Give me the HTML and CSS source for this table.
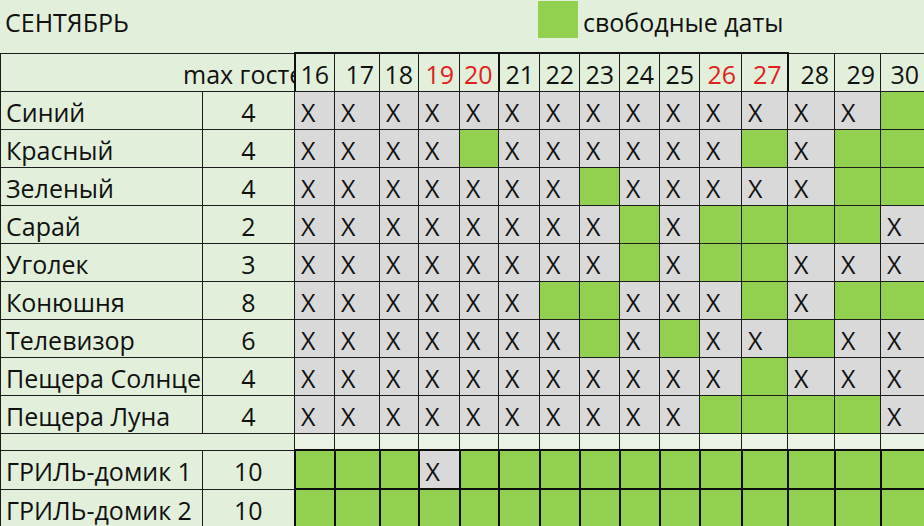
FILE: index.html
```html
<!DOCTYPE html>
<html lang="ru">
<head>
<meta charset="utf-8">
<title>Сентябрь</title>
<link rel="stylesheet" href="styles.css">
</head>
<body>
<div class="top">
  <div class="title">СЕНТЯБРЬ</div>
  <div class="legend"><span class="swatch"></span><span class="legend-text">свободные даты</span></div>
</div>
<table class="sheet">
  <colgroup>
    <col class="c-name"><col class="c-max">
    <col style="width:40px"><col style="width:45px"><col style="width:39px"><col style="width:41px"><col style="width:39px">
    <col style="width:41px"><col style="width:40px"><col style="width:40px"><col style="width:40px"><col style="width:40px">
    <col style="width:42px"><col style="width:46px"><col style="width:47px"><col style="width:46px"><col style="width:44px">
  </colgroup>
  <tr class="hdr">
    <td colspan="2" class="maxlabel">max гостей</td>
    <td class="d wk wk-l">16</td><td class="d wk">17</td><td class="d wk">18</td><td class="d wk red">19</td><td class="d wk wk-r red">20</td>
    <td class="d wk">21</td><td class="d wk">22</td><td class="d wk">23</td><td class="d wk">24</td><td class="d wk">25</td><td class="d wk red">26</td><td class="d wk wk-r red">27</td>
    <td class="d">28</td><td class="d">29</td><td class="d">30</td>
  </tr>
  <tr>
    <td class="name">Синий</td><td class="max">4</td>
    <td class="x">X</td><td class="x">X</td><td class="x">X</td><td class="x">X</td><td class="x">X</td><td class="x">X</td><td class="x">X</td><td class="x">X</td><td class="x">X</td><td class="x">X</td><td class="x">X</td><td class="x">X</td><td class="x">X</td><td class="x">X</td><td class="g"></td>
  </tr>
  <tr>
    <td class="name">Красный</td><td class="max">4</td>
    <td class="x">X</td><td class="x">X</td><td class="x">X</td><td class="x">X</td><td class="g"></td><td class="x">X</td><td class="x">X</td><td class="x">X</td><td class="x">X</td><td class="x">X</td><td class="x">X</td><td class="g"></td><td class="x">X</td><td class="g"></td><td class="g"></td>
  </tr>
  <tr>
    <td class="name">Зеленый</td><td class="max">4</td>
    <td class="x">X</td><td class="x">X</td><td class="x">X</td><td class="x">X</td><td class="x">X</td><td class="x">X</td><td class="x">X</td><td class="g"></td><td class="x">X</td><td class="x">X</td><td class="x">X</td><td class="x">X</td><td class="x">X</td><td class="g"></td><td class="g"></td>
  </tr>
  <tr>
    <td class="name">Сарай</td><td class="max">2</td>
    <td class="x">X</td><td class="x">X</td><td class="x">X</td><td class="x">X</td><td class="x">X</td><td class="x">X</td><td class="x">X</td><td class="x">X</td><td class="g"></td><td class="x">X</td><td class="g"></td><td class="g"></td><td class="g"></td><td class="g"></td><td class="x">X</td>
  </tr>
  <tr>
    <td class="name">Уголек</td><td class="max">3</td>
    <td class="x">X</td><td class="x">X</td><td class="x">X</td><td class="x">X</td><td class="x">X</td><td class="x">X</td><td class="x">X</td><td class="x">X</td><td class="g"></td><td class="x">X</td><td class="g"></td><td class="g"></td><td class="x">X</td><td class="x">X</td><td class="x">X</td>
  </tr>
  <tr>
    <td class="name">Конюшня</td><td class="max">8</td>
    <td class="x">X</td><td class="x">X</td><td class="x">X</td><td class="x">X</td><td class="x">X</td><td class="x">X</td><td class="g"></td><td class="g"></td><td class="x">X</td><td class="x">X</td><td class="x">X</td><td class="g"></td><td class="x">X</td><td class="g"></td><td class="g"></td>
  </tr>
  <tr>
    <td class="name">Телевизор</td><td class="max">6</td>
    <td class="x">X</td><td class="x">X</td><td class="x">X</td><td class="x">X</td><td class="x">X</td><td class="x">X</td><td class="x">X</td><td class="g"></td><td class="x">X</td><td class="g"></td><td class="x">X</td><td class="x">X</td><td class="g"></td><td class="x">X</td><td class="x">X</td>
  </tr>
  <tr>
    <td class="name">Пещера Солнце</td><td class="max">4</td>
    <td class="x">X</td><td class="x">X</td><td class="x">X</td><td class="x">X</td><td class="x">X</td><td class="x">X</td><td class="x">X</td><td class="x">X</td><td class="x">X</td><td class="x">X</td><td class="x">X</td><td class="g"></td><td class="x">X</td><td class="x">X</td><td class="x">X</td>
  </tr>
  <tr>
    <td class="name">Пещера Луна</td><td class="max">4</td>
    <td class="x">X</td><td class="x">X</td><td class="x">X</td><td class="x">X</td><td class="x">X</td><td class="x">X</td><td class="x">X</td><td class="x">X</td><td class="x">X</td><td class="x">X</td><td class="g"></td><td class="g"></td><td class="g"></td><td class="g"></td><td class="x">X</td>
  </tr>
  <tr class="spacer">
    <td colspan="2" class="sp-name"></td>
    <td class="sp"></td><td class="sp"></td><td class="sp"></td><td class="sp"></td><td class="sp"></td><td class="sp"></td><td class="sp"></td><td class="sp"></td><td class="sp"></td><td class="sp"></td><td class="sp"></td><td class="sp"></td><td class="sp"></td><td class="sp"></td><td class="sp"></td>
  </tr>
  <tr class="grill">
    <td class="name">ГРИЛЬ-домик 1</td><td class="max">10</td>
    <td class="g b">&nbsp;</td><td class="g b"></td><td class="g b"></td><td class="x b">X</td><td class="g b"></td><td class="g b"></td><td class="g b"></td><td class="g b"></td><td class="g b"></td><td class="g b"></td><td class="g b"></td><td class="g b"></td><td class="g b"></td><td class="g b"></td><td class="g b"></td>
  </tr>
  <tr class="grill">
    <td class="name">ГРИЛЬ-домик 2</td><td class="max">10</td>
    <td class="g b">&nbsp;</td><td class="g b"></td><td class="g b"></td><td class="g b"></td><td class="g b"></td><td class="g b"></td><td class="g b"></td><td class="g b"></td><td class="g b"></td><td class="g b"></td><td class="g b"></td><td class="g b"></td><td class="g b"></td><td class="g b"></td><td class="g b"></td>
  </tr>
</table>
</body>
</html>
```
FILE: styles.css
```css
html, body {
  margin: 0;
  padding: 0;
}
body {
  width: 924px;
  height: 526px;
  overflow: hidden;
  background: #e2efda;
  font-family: "Open Sans", "Noto Sans", sans-serif;
  font-size: 25px;
  color: #111;
}
.top {
  height: 52px;
  display: flex;
  align-items: flex-start;
}
.title {
  padding: 5px 0 0 5px;
  line-height: 34px;
  width: 533px;
}
.legend {
  display: flex;
  align-items: flex-start;
}
.swatch {
  display: block;
  width: 40px;
  height: 37px;
  margin-top: 1px;
  background: #92d050;
}
.legend-text {
  padding: 5px 0 0 5px;
  line-height: 34px;
}
.sheet {
  border-collapse: collapse;
  table-layout: fixed;
  width: 924px;
}
.c-name { width: 202px; }
.c-max { width: 92px; }
.sheet td {
  border: 1px solid #1c1c1c;
  padding: 3px 0 0 0;
  line-height: 34px;
  height: 34px;
  vertical-align: top;
  white-space: nowrap;
  overflow: hidden;
}
.sheet td.maxlabel {
  padding-left: 182px;
  text-align: left;
}
.sheet td.d {
  text-align: right;
  padding-right: 5px;
}
.sheet td.red { color: #e0201d; }
.sheet td.wk { border-top: 2px solid #111; }
.sheet td.wk-l { border-left: 2px solid #111; }
.sheet td.wk-r { border-right: 2px solid #111; }
.sheet td.name {
  padding-left: 5px;
}
.sheet td.max {
  text-align: center;
}
.sheet td.x {
  background: #d9d9d9;
  padding-left: 6px;
}
.sheet td.g {
  background: #92d050;
}
.sheet td.b {
  border: 2px solid #0c0c0c;
}
.sheet .spacer td {
  height: 15px;
  line-height: 15px;
  padding: 0;
}
.sheet td.sp {
  background: #ebf3e4;
}
.sheet .grill td {
  height: 33px;
}
```
